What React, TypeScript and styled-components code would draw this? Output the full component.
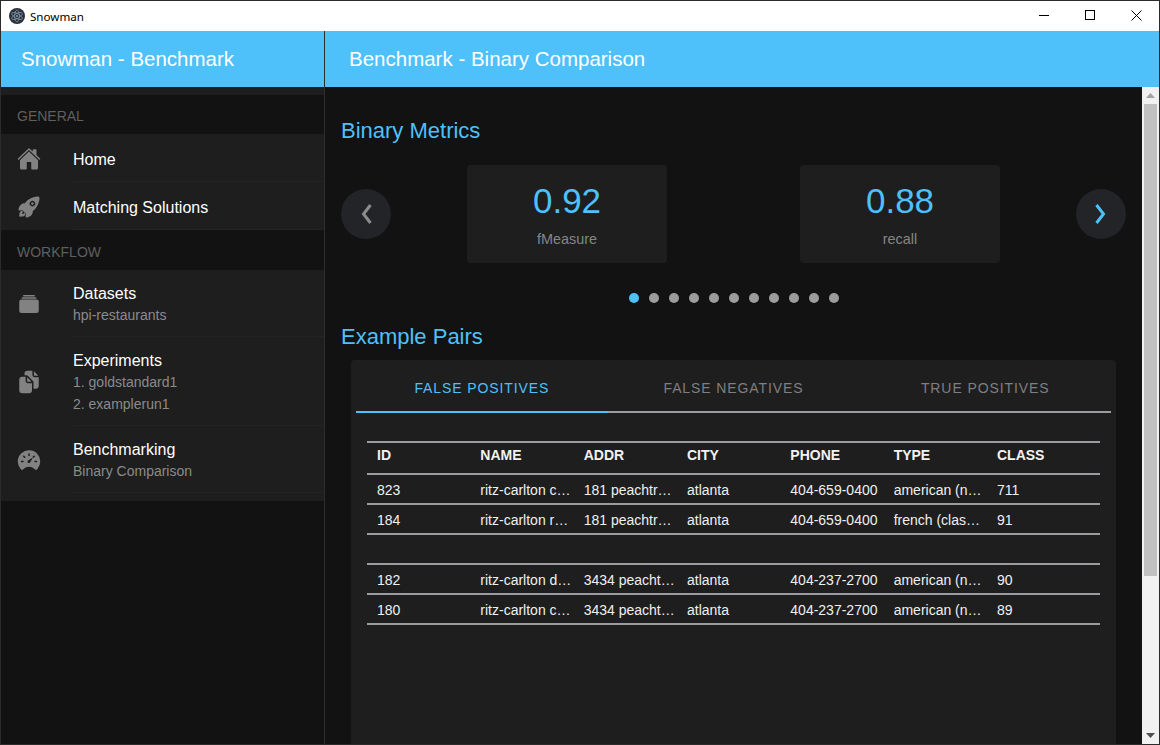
import React from "react";
import styled, { createGlobalStyle } from "styled-components";
import { IoHome, IoRocket, IoAlbums, IoDocuments, IoSpeedometer } from "react-icons/io5";

const Global = createGlobalStyle`
  html, body { margin: 0; padding: 0; height: 100%; overflow: hidden; background: #121212; }
  #root { height: 100%; }
  * { box-sizing: border-box; }
`;

const Win = styled.div`
  width: 1160px; height: 745px; display: flex; flex-direction: column; overflow: hidden;
  border: 1px solid #2b2b2b;
  font-family: "Liberation Sans", Arial, sans-serif; background: #121212;
`;
const TitleBar = styled.div`
  height: 30px; flex: none; background: #fff; display: flex; align-items: center; padding-left: 8px; color: #000;
  font: 11.6px "Noto Sans", "Open Sans", sans-serif;
`;
const TitleText = styled.span` margin-left: 5px; flex: 1; `;
const WinBtn = styled.div` width: 46px; height: 30px; padding-bottom: 2px; display: flex; align-items: center; justify-content: center; `;
const Body = styled.div` flex: 1; display: flex; min-height: 0; `;

const Side = styled.aside`
  width: 324px; flex: none; display: flex; flex-direction: column; border-right: 1px solid #2e2e2e; background: #121212;
`;
const AppBar = styled.div`
  height: 56px; flex: none; background: #4ec0fa; color: #fff; display: flex; align-items: center;
`;
const SideTitle = styled.div` font-size: 20.5px; font-weight: 500; padding-left: 20px; `;
const MainTitle = styled.div` font-size: 20.5px; font-weight: 500; padding-left: 24px; `;
const SideList = styled.div` background: #1e1e1e; padding: 8px 0; `;
const Divider = styled.div`
  height: ${p => p.$h}px; background: #121212; color: #5f5f5f; font-size: 14px; display: flex; align-items: center;
  padding: 3px 0 0 16px;
`;
const Item = styled.div`
  height: ${p => p.$h}px; display: flex; align-items: center; padding: 1px 0 0 16px; background: #1e1e1e;
`;
const IconBox = styled.div` width: 56px; flex: none; display: flex; color: #828282; font-size: 24px; `;
const ItemBody = styled.div`
  flex: 1; align-self: stretch; display: flex; flex-direction: column; justify-content: center;
  padding-top: ${p => p.$sub ? 1 : 3}px; border-bottom: 1px solid #232323;
`;
const ItemTitle = styled.div` color: #fff; font-size: 16px; line-height: 21px; `;
const ItemSub = styled.div` color: #8b8b8b; font-size: 14px; line-height: 22px; `;

const Main = styled.main` flex: 1; min-width: 0; display: flex; flex-direction: column; `;
const Content = styled.div` flex: 1; min-height: 0; display: flex; `;
const Scroll = styled.div` flex: 1; min-width: 0; overflow: hidden; padding: 32px 16px 0 16px; `;
const H2 = styled.h2`
  margin: 0; font-size: 22px; font-weight: 400; line-height: 24px; color: #4ec0fa;
`;
const Carousel = styled.div` margin-top: 22px; height: 98px; display: flex; align-items: center; justify-content: space-between; `;
const Arrow = styled.div`
  width: 50px; height: 50px; border-radius: 50%; background: #222428; display: flex; align-items: center; justify-content: center;
  color: ${p => p.$on ? "#4ec0fa" : "#8b8b8b"};
`;
const Slides = styled.div` display: flex; gap: 133px; `;
const Metric = styled.div`
  width: 200px; height: 98px; border-radius: 4px; background: #1e1e1e; display: flex; flex-direction: column; align-items: center;
`;
const MetricValue = styled.div` margin-top: 16px; font-size: 35px; line-height: 40px; color: #4ec0fa; `;
const MetricLabel = styled.div` margin-top: 9px; font-size: 14.4px; line-height: 18px; color: #858585; `;
const Dots = styled.div` margin-top: 30px; height: 10px; padding-left: 288px; display: flex; gap: 10px; `;
const Dot = styled.span`
  width: 10px; height: 10px; border-radius: 50%; background: ${p => p.$on ? "#4ec0fa" : "#9c9c9c"};
`;
const PairsTitle = styled(H2)` margin-top: 22px; `;
const Card = styled.section`
  margin: 11px 10px 0; height: 500px; background: #1e1e1e; border-radius: 4px; padding: 5px 5px 0;
`;
const Tabs = styled.div` display: grid; grid-template-columns: repeat(3, 1fr); height: 48px; `;
const Tab = styled.div`
  display: flex; align-items: center; justify-content: center; font-size: 14px; letter-spacing: 0.9px;
  color: ${p => p.$on ? "#4ec0fa" : "#7f7f82"};
  border-bottom: 2px solid ${p => p.$on ? "#4ec0fa" : "#9b9ba0"};
`;
const TableWrap = styled.div` margin: 28px 11px 0; `;
const Row = styled.div`
  display: grid; grid-template-columns: repeat(7, 103.33px); height: ${p => p.$h || 30}px; align-items: center;
  border-bottom: 2px solid #9b9ba0; font-size: 14px; color: #f0f0f0;
  ${p => p.$top ? "border-top: 2px solid #9b9ba0;" : ""}
`;
const Head = styled.div`
  padding: 0 0 6px 10px; font-weight: 700; color: #f2f2f2; font-size: 14px;
`;
const Cell = styled.div`
  padding: 1px 0 0 10px; white-space: nowrap;
`;
const Gap = styled.div` height: 30px; border-bottom: 2px solid #9b9ba0; `;

const Bar = styled.div`
  width: 17px; flex: none; background: #f1f1f1; display: flex; flex-direction: column; align-items: center;
`;
const BarBtn = styled.div` height: 17px; flex: none; display: flex; align-items: center; justify-content: center; `;
const Thumb = styled.div` width: 13px; height: 472px; flex: none; background: #c1c1c1; `;
const Spacer = styled.div` flex: 1; `;

const Logo = () => (
  <svg width="16" height="16" viewBox="0 0 16 16">
    <circle cx="8" cy="8" r="8" fill="#2b2e3b" />
    <g fill="none" stroke="#86a3ad" strokeWidth=".7">
      <ellipse cx="8" cy="8" rx="6" ry="2.4" transform="rotate(30 8 8)" />
      <ellipse cx="8" cy="8" rx="6" ry="2.4" transform="rotate(90 8 8)" />
      <ellipse cx="8" cy="8" rx="6" ry="2.4" transform="rotate(150 8 8)" />
    </g>
    <circle cx="8" cy="8" r="1" fill="#86a3ad" />
  </svg>
);

const pairs = [
  [["823", "ritz-carlton c…", "181 peachtr…", "atlanta", "404-659-0400", "american (n…", "711"],
   ["184", "ritz-carlton r…", "181 peachtr…", "atlanta", "404-659-0400", "french (clas…", "91"]],
  [["182", "ritz-carlton d…", "3434 peacht…", "atlanta", "404-237-2700", "american (n…", "90"],
   ["180", "ritz-carlton c…", "3434 peacht…", "atlanta", "404-237-2700", "american (n…", "89"]],
];
const cols = ["ID", "NAME", "ADDR", "CITY", "PHONE", "TYPE", "CLASS"];

export default function App() {
  return (
    <Win>
      <Global />
      <TitleBar>
        <Logo />
        <TitleText>Snowman</TitleText>
        <WinBtn><svg width="10" height="10"><path d="M0 5.500h10" stroke="#000" /></svg></WinBtn>
        <WinBtn><svg width="10" height="10"><rect x=".5" y=".5" width="9" height="9" fill="none" stroke="#000" /></svg></WinBtn>
        <WinBtn><svg width="11" height="11"><path d="M.5.5l10 10M10.500.5l-10 10" stroke="#000" /></svg></WinBtn>
      </TitleBar>
      <Body>
        <Side>
          <AppBar><SideTitle>Snowman - Benchmark</SideTitle></AppBar>
          <SideList>
            <Divider $h={39}>GENERAL</Divider>
            <Item $h={48}><IconBox><IoHome /></IconBox><ItemBody><ItemTitle>Home</ItemTitle></ItemBody></Item>
            <Item $h={48}><IconBox><IoRocket /></IconBox><ItemBody><ItemTitle>Matching Solutions</ItemTitle></ItemBody></Item>
            <Divider $h={40}>WORKFLOW</Divider>
            <Item $h={67}><IconBox><IoAlbums /></IconBox><ItemBody $sub><ItemTitle>Datasets</ItemTitle><ItemSub>hpi-restaurants</ItemSub></ItemBody></Item>
            <Item $h={89}><IconBox><IoDocuments /></IconBox><ItemBody $sub><ItemTitle>Experiments</ItemTitle><ItemSub>1. goldstandard1</ItemSub><ItemSub>2. examplerun1</ItemSub></ItemBody></Item>
            <Item $h={67}><IconBox><IoSpeedometer /></IconBox><ItemBody $sub><ItemTitle>Benchmarking</ItemTitle><ItemSub>Binary Comparison</ItemSub></ItemBody></Item>
          </SideList>
        </Side>
        <Main>
          <AppBar><MainTitle>Benchmark - Binary Comparison</MainTitle></AppBar>
          <Content>
            <Scroll>
              <H2>Binary Metrics</H2>
              <Carousel>
                <Arrow>
                  <svg width="14" height="22" viewBox="0 0 14 22"><path d="M11.500 2L4.500 11l7 9" fill="none" stroke="currentColor" strokeWidth="3" /></svg>
                </Arrow>
                <Slides>
                  <Metric><MetricValue>0.92</MetricValue><MetricLabel>fMeasure</MetricLabel></Metric>
                  <Metric><MetricValue>0.88</MetricValue><MetricLabel>recall</MetricLabel></Metric>
                </Slides>
                <Arrow $on>
                  <svg width="14" height="22" viewBox="0 0 14 22"><path d="M2.500 2l7 9-7 9" fill="none" stroke="currentColor" strokeWidth="3" /></svg>
                </Arrow>
              </Carousel>
              <Dots>{Array.from({ length: 11 }).map((_, i) => <Dot key={i} $on={i === 0} />)}</Dots>
              <PairsTitle>Example Pairs</PairsTitle>
              <Card>
                <Tabs>
                  <Tab $on>FALSE POSITIVES</Tab>
                  <Tab>FALSE NEGATIVES</Tab>
                  <Tab>TRUE POSITIVES</Tab>
                </Tabs>
                <TableWrap>
                  <Row $h={34} $top>{cols.map(c => <Head key={c}>{c}</Head>)}</Row>
                  {pairs.map((p, i) => (
                    <React.Fragment key={i}>
                      {i > 0 && <Gap />}
                      {p.map(r => <Row key={r[0]}>{r.map((c, j) => <Cell key={j}>{c}</Cell>)}</Row>)}
                    </React.Fragment>
                  ))}
                </TableWrap>
              </Card>
            </Scroll>
            <Bar>
              <BarBtn><svg width="9" height="5"><path d="M4.500 0L9 5H0z" fill="#a3a3a3" /></svg></BarBtn>
              <Thumb />
              <Spacer />
              <BarBtn><svg width="9" height="5"><path d="M0 0h9L4.500 5z" fill="#505050" /></svg></BarBtn>
            </Bar>
          </Content>
        </Main>
      </Body>
    </Win>
  );
}
